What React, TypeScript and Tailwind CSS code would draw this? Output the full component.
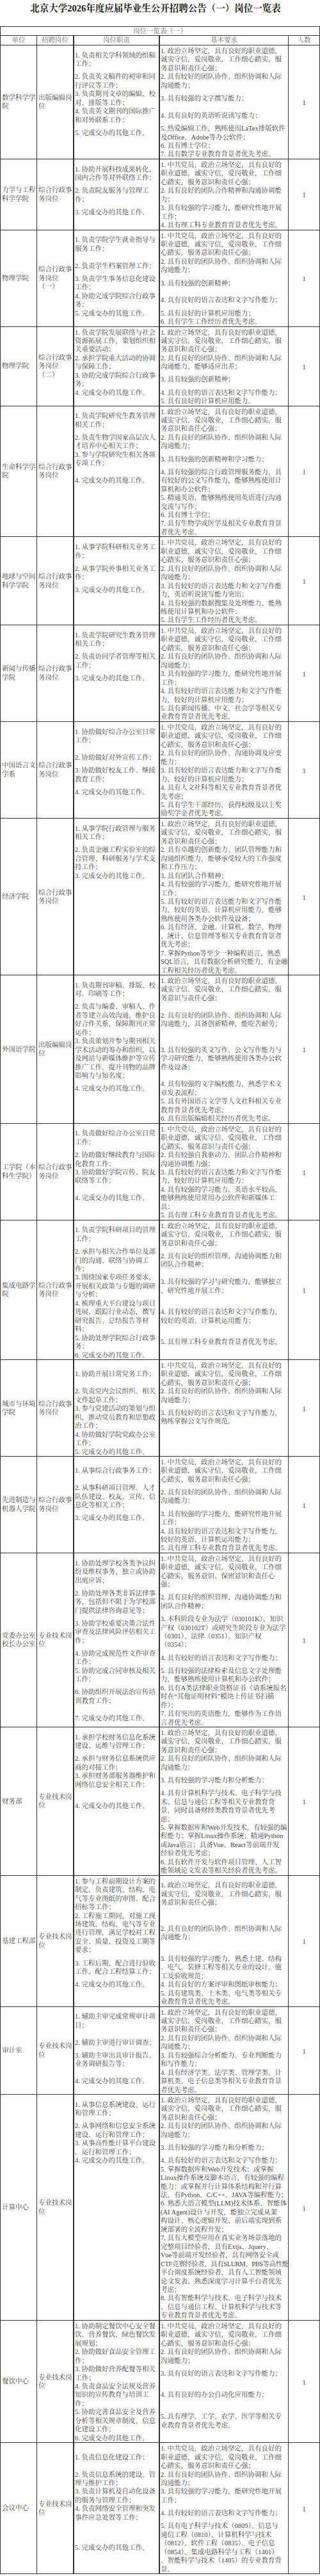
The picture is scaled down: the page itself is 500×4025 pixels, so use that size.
import React, { Fragment } from "react";

const PARTY =
  "1. 中共党员，政治立场坚定，具有良好的|职业道德，诚实守信，爱岗敬业，工作细|心踏实，服务意识和责任心强；";
const STD =
  "1. 政治立场坚定，具有良好的职业道德，|诚实守信，爱岗敬业，工作细心踏实，服|务意识和责任心强；";
const TEAM = "2. 具有良好的团队协作、组织协调和人际|沟通能力；";
const DONE = "完成交办的其他工作。";
const ZH = "综合行政事|务岗位";
const ZY = "专业技术岗|位";

type Row = { u: string; p: string; d: string[]; r: string[] };

const rows: Row[] = [
  {
    u: "数学科学学|院",
    p: "出版编辑岗|位",
    d: [
      "1. 负责相关学科领域的组稿|工作；",
      "2. 负责英文稿件的初审和同|行评议等工作；",
      "3. 负责期刊文章的编辑、校|对、排版等工作；",
      "4. 负责英文期刊的国际推广|和对外联系工作；",
      "5. " + DONE,
    ],
    r: [
      STD,
      "2. 具有较好的团队协作、组织协调和人际|沟通能力；",
      "3. 具有较强的文字撰写能力；",
      "4. 具有良好的英语听说读写能力；",
      "5. 热爱编辑工作，熟练使用LaTex排版软件|及Office、Adobe等办公软件；",
      "6. 具有博士学位；",
      "7. 具有数学专业教育背景者优先考虑。",
    ],
  },
  {
    u: "力学与工程|科学学院",
    p: ZH,
    d: [
      "1. 协助开展科技成果转化、|国内合作等对外联络工作；",
      "2. 负责院友服务与管理工|作；",
      "3. " + DONE,
    ],
    r: [
      PARTY,
      "2. 具有良好的团队合作精神和沟通协调能|力；",
      "3. 具有较强的学习能力，能研究性地开展|工作；",
      "4. 具有理工科专业教育背景者优先考虑。",
    ],
  },
  {
    u: "物理学院",
    p: "综合行政事|务岗位|（一）",
    d: [
      "1. 负责学院学生就业指导与|服务工作；",
      "2. 负责学生档案管理工作；",
      "3. 负责学生事务信息化建设|工作；",
      "4. 协助完成学院综合行政事|务；",
      "5. " + DONE,
    ],
    r: [
      PARTY,
      TEAM,
      "3. 具有较强的创新精神；",
      "4. 具有良好的语言表达和文字写作能力；",
      "5. 具有良好的计算机应用能力；",
      "6. 具有学生工作经历者优先考虑。",
    ],
  },
  {
    u: "物理学院",
    p: "综合行政事|务岗位|（二）",
    d: [
      "1. 负责学院发展联络与社会|资源拓展工作，策划组织相|关重要活动；",
      "2. 承担学院重大活动的协调|与保障工作；",
      "3. 协助完成学院综合行政事|务；",
      "4. " + DONE,
    ],
    r: [
      STD,
      "2. 具有良好的团队协作、组织协调和人际|沟通能力，能够适应出差；",
      "3. 具有较强的创新精神；",
      "4. 具有良好的语言表达和文字写作能力；",
      "5. 具有良好的计算机应用能力。",
    ],
  },
  {
    u: "生命科学学|院",
    p: ZH,
    d: [
      "1. 负责学院研究生教务管理|相关工作；",
      "2. 负责生物学国家高层次人|才培养中心相关工作；",
      "3. 参与学院研究生相关各项|专项工作；",
      "4. " + DONE,
    ],
    r: [
      STD,
      TEAM,
      "3. 具有较强的创新精神和学习能力；",
      "4. 具有较强的综合行政管理服务能力，具|有较好的公文写作能力，能够熟练使用计|算机和办公软件；",
      "5. 精通英语，能够熟练使用英语进行沟通|交流与写作；",
      "6. 具有博士学位；",
      "7. 具有生物学或医学及相关专业教育背景|者优先考虑。",
    ],
  },
  {
    u: "地球与空间|科学学院",
    p: ZH,
    d: ["1. 从事学院科研相关业务工|作；", "2. 从事学院外事相关业务工|作；", "3. " + DONE],
    r: [
      PARTY,
      TEAM,
      "3. 具有较好的语言表达能力和文字写作能|力，英语听说读写能力突出；",
      "4. 具有较强的数据搜集及处理能力，能熟|练使用计算机和办公软件；",
      "5. 具有学生工作经历者优先考虑。",
    ],
  },
  {
    u: "新闻与传播|学院",
    p: ZH,
    d: ["1. 负责学院研究生教务管理|相关工作；", "2. 负责访问学者管理等相关|工作；", "3. " + DONE],
    r: [
      PARTY,
      TEAM,
      "3. 具有较强的学习能力，能研究性地开展|工作；",
      "4. 具有较好的语言表达能力和文字写作能|力，较好的计算机应用能力；",
      "5. 具有新闻传播、中文、社会学等相关专|业教育背景者优先考虑。",
    ],
  },
  {
    u: "中国语言文|学系",
    p: ZH,
    d: [
      "1. 协助做好综合办公室日常|工作；",
      "2. 协助做好对外宣传工作；",
      "3. 协助做好校友工作、继续|教育工作；",
      "4. " + DONE,
    ],
    r: [
      PARTY,
      "2. 具有良好的团队协作、沟通协调及应变|能力；",
      "3. 具有较好的语言表达能力和文字写作能|力，较好的计算机应用能力；",
      "4. 具有人文社科等相关专业教育背景者优|先考虑；",
      "5. 具有学生干部经历，获得校级及以上奖|励奖学金者优先考虑。",
    ],
  },
  {
    u: "经济学院",
    p: ZH,
    d: [
      "1. 从事学院行政管理与服务|相关工作；",
      "2. 负责金融工程实验室的综|合管理、科研服务与学术支|持工作；",
      "3. " + DONE,
    ],
    r: [
      STD,
      "2. 具有卓越的创新能力、团队管理能力和|沟通组织能力，能够承受较大的工作强度|和工作压力；",
      "3. 具有团队合作精神；",
      "4. 具有较强的学习能力，能研究性地开展|工作；",
      "5. 具有较好的语言表达能力和文字写作能|力，较好的英语、计算机应用能力，能够|熟练使用各类办公软件及设备；",
      "6. 具有经济、金融、计算机、数学、物理|、统计、信息管理等相关专业教育背景者|优先考虑；",
      "7. 掌握Python等至少一种编程语言，熟悉|SQL语言，具有数据分析研究能力，有金融|工程相关经历者优先考虑。",
    ],
  },
  {
    u: "外国语学院",
    p: "出版编辑岗|位",
    d: [
      "1. 负责期刊审稿、排版、校|对、印刷等工作；",
      "2. 负责与编委、审稿人、作|者等建立高效沟通，维护良|好合作关系，保障期刊正常|运作；",
      "3. 负责策划并参与期刊相关|学术活动的筹办和组织，以|及网站与新媒体维护等宣传|推广工作，提升刊物的品牌|影响力与知名度；",
      "4. " + DONE,
    ],
    r: [
      "1. 政治立场坚定，具有良好的职业道德，|诚实守信、爱岗敬业，工作细心踏实，服|务意识与责任心强；",
      "2. 具有良好的团队协作、组织协调和人际|沟通能力，具备创新精神，能吃苦耐劳；",
      "3. 具有较强的英文写作、公文写作能力与|学习研究能力，能够熟练使用各类办公软|件及设备；",
      "4. 具有较强的文字编校能力，熟悉学术文|章发表流程；",
      "5. 具有外国语言文学等人文社科相关专业|教育背景者优先考虑；",
      "6. 具有出版编辑相关经历者优先考虑。",
    ],
  },
  {
    u: "工学院（本|科生学院）",
    p: ZH,
    d: [
      "1. 负责做好综合办公室日常|工作；",
      "2. 协助做好继续教育与国际|化教育工作；",
      "3. 协助做好学院宣传、院友|联络等工作；",
      "4. " + DONE,
    ],
    r: [
      "1. 中共党员，政治立场坚定，具有良好的|职业道德，诚实守信、爱岗敬业，工作细|心踏实，服务意识与责任心强；",
      "2. 具有较强自我驱动力，团队合作精神和|沟通协调能力强；",
      "3. 具有较好的语言表达能力和文字写作能|力，较好的计算机应用能力；",
      "4. 具有较强的学习能力，英语水平较高，|能够熟练使用常用办公软件和新媒体工|具；",
      "5. 具有理工科专业教育背景者优先考虑。",
    ],
  },
  {
    u: "集成电路学|院",
    p: ZH,
    d: [
      "1. 负责学院科研项目的管理|工作；",
      "2. 承担与相关合作单位及部|门的沟通、联络与协调工|作；",
      "3. 围绕国家专项任务要求，|开展相关政策与专题的调研|与分析；",
      "4. 梳理重大平台建设与项目|进展，跟踪行业动态，撰写|研究报告、总结报告等材|料；",
      "5. 协助处理学院综合行政事|务；",
      "6. " + DONE,
    ],
    r: [
      STD,
      "2. 具有良好的组织管理、沟通协调能力和|团队合作精神；",
      "3. 具有较强的学习与研究能力，能够独立|、研究性地开展工作；",
      "4. 具有较好的语言表达和文字写作能力，|较好的英语、计算机运用能力；",
      "5. 具有理工科专业教育背景者优先考虑。",
    ],
  },
  {
    u: "城市与环境|学院",
    p: ZH,
    d: [
      "1. 协助开展日常党务工作；",
      "2. 负责党内会议组织、相关|文件起草工作；",
      "3. 参与党建活动的策划与组|织，推动党员教育和思想政|治工作；",
      "4. 协助做好学院党政办公室|工作；",
      "5. " + DONE,
    ],
    r: [PARTY, TEAM, "3. 具有较好的语言表达和文字写作能力，|熟练掌握公文写作规范。"],
  },
  {
    u: "先进制造与|机器人学院",
    p: ZH,
    d: [
      "1. 从事综合行政事务工作；",
      "2. 从事科研项目管理、人才|队伍建设、校友、宣传、信|息化等相关工作；",
      "3. " + DONE,
    ],
    r: [
      PARTY,
      TEAM,
      "3. 具有较强的学习能力，能研究性地开展|工作；",
      "4. 具有较好的语言表达和文字写作能力，|较好的英语、计算机运用能力；",
      "5. 具有理工科专业教育背景者优先考虑。",
    ],
  },
  {
    u: "党委办公室|校长办公室",
    p: ZY,
    d: [
      "1. 协助处理学校各类争议纠|纷及维权事务，独立或协助|出庭应诉；",
      "2. 协助处理各类非诉法律事|务，包括但不限于为学校部|门提供法律咨询意见等；",
      "3. 协助学校重要决策合法性|审查及法律风险评估相关工|作；",
      "4. 协助完成规范性文件审查|工作；",
      "5. 协助完成合同审核及相关|工作；",
      "6. 协助组织开展法治宣传培|训教育工作；",
      "7. " + DONE,
    ],
    r: [
      "1. 中共党员，政治立场坚定，具有良好的|职业道德，诚实守信，爱岗敬业，工作细|心踏实，服务意识、保密意识和责任心|强；",
      "2. 具有良好的组织管理、沟通协调能力和|团队合作精神；",
      "3. 本科阶段专业为法学（030101K）、知识|产权（030102T）或研究生阶段专业为法学|（0301）、法律（0351）、知识产权|（0354）；",
      "4. 具有较好的语言表达和文字写作能力；",
      "5. 具有较强的法律检索及信息文字处理能|力，能够熟练使用计算机和办公软件；",
      "6. 具有A类法律职业资格证书（请系统报名|时在“其他证明材料”模块上传证书扫描|件）；",
      "7. 具有突出的英语能力，能够作为工作语|言者优先考虑。",
    ],
  },
  {
    u: "财务部",
    p: ZY,
    d: [
      "1. 承担学校财务信息化系统|建设、运维与管理工作；",
      "2. 承担与财务信息系统供应|商的对接工作；",
      "3. 承担财务部服务器维护和|网络信息安全相关工作；",
      "4. " + DONE,
    ],
    r: [
      STD,
      TEAM,
      "3. 具有较强的学习能力和分析能力；",
      "4. 具有计算机科学与技术、电子科学与技|术、信息与通信工程等相关专业教育背|景，同时具备财经类教育背景者优先考|虑；",
      "5. 掌握数据库和Web开发技术，有较强的编|程能力；掌握Linux操作系统；精通Python|或Java语言；具备Vue、React等前端开发|经验者优先考虑；",
      "6. 具有软件开发与软件项目管理、人工智|能领域论文发表等相关经验者优先考虑。",
    ],
  },
  {
    u: "基建工程部",
    p: ZY,
    d: [
      "1. 参与工程前期设计方案的|制定，负责建筑、结构、电|气等专业图纸的审图、配合|招标等工作；",
      "2. 工程施工期间，对施工现|场建筑、结构、电气等专业|进行管理，满足学校对工程|安全、质量、投资及工期等|要求；",
      "3. 工程后期，配合进行验收|工作，配合工程结算工作；",
      "4. " + DONE,
    ],
    r: [
      STD,
      TEAM,
      "3. 具有较强的学习能力，熟悉土建、结构|、电气、装修工程等相关专业的设计、施|工及验收规范；",
      "4. 具有良好的方案评审和图纸审核能力；",
      "5. 具有建筑类、土木类、电气类等相关专|业教育背景者优先考虑。",
    ],
  },
  {
    u: "审计室",
    p: ZY,
    d: [
      "1. 辅助主审完成常规审计项|目；",
      "2. 辅助主审进行审计调查；",
      "3. 辅助主审出具审计报告、|业务调研报告等；",
      "4. " + DONE,
    ],
    r: [
      STD,
      TEAM,
      "3. 具有较强综合分析能力、专业判断能力|和写作能力；",
      "4. 具有经济学类、法学类、管理学类、计|算机类、电子信息类等相关专业教育背景|者优先考虑。",
    ],
  },
  {
    u: "计算中心",
    p: ZY,
    d: [
      "1. 从事信息系统建设、运行|和管理工作；",
      "2. 从事网络和信息安全系统|建设、运行和管理工作；",
      "3. 从事高性能计算平台建设|、运行和管理工作；",
      "4. " + DONE,
    ],
    r: [
      STD,
      TEAM,
      "3. 具有较强的学习能力和分析能力；",
      "4. 具有较好的语言表达和文字写作能力；",
      "5. 掌握数据库和Web开发技术；或掌握|Linux操作系统及脚本语言，有较强的编程|能力；或掌握并行计算体系结构和并行算|法，有Python、C/C++、JAVA等编程能力；",
      "6. 熟悉大语言模型(LLM)技术体系、智能体|(AI Agent)设计与开发，能独立完成从架|构设计、核心逻辑开发、前后端实现到系|统部署的全流程开发；",
      "7. 具有大模型应用在真实业务场景落地的|完整项目经验者，具有Extjs、Jquery、|Vue等前端开发经验者，具有网络安全或|~CTF竞赛经验者，具有SLURM、PBS等高性能|平台调度系统经验者，具有人工智能领域|论文发表、熟悉深度学习计算平台者优先|考虑；",
      "8. 具有智能科学与技术、电子科学与技术|、信息与通信工程、计算机科学与技术等|专业教育背景者优先考虑。",
    ],
  },
  {
    u: "餐饮中心",
    p: ZY,
    d: [
      "1. 协助制定餐饮中心安全餐|饮、营养餐饮、绿色餐饮发|展规划；",
      "2. 协助做好食品安全管理工|作；",
      "3. 协助做好营养配餐等相关|工作；",
      "4. 负责食品安全法规及营养|知识的宣传教育与培训工|作；",
      "5. 协助完善食品安全及营养|分析等相关规章制度、信息|化建设工作；",
      "6. " + DONE,
    ],
    r: [
      PARTY,
      TEAM,
      "3. 具有良好的语言表达和文字写作能力；",
      "4. 具有良好的办公自动化应用能力；",
      "5. 具有理学、工学、农学、医学等相关专|业教育背景者优先考虑。",
    ],
  },
  {
    u: "会议中心",
    p: ZY,
    d: [
      "1. 负责信息化建设工作；",
      "2. 负责信息系统的建设、管|理与维护工作；",
      "3. 负责计算机及自动化设备|的服务与管理工作；",
      "4. 负责网络安全管理和突发|事件应急处置等工作；",
      "5. " + DONE,
    ],
    r: [
      PARTY,
      TEAM,
      "3. 具有较强的学习能力，能研究性地开展|工作；",
      "4. 具有较好的语言表达和文字写作能力；",
      "5. 具有电子科学与技术（0809）、信息与|通信工程（0810）、计算机科学与技术|（0812）、软件工程（0835）、电子信息|（0854）、集成电路科学与工程（1401）|、智能科学与技术（1405）的专业教育背|景。",
    ],
  },
];

function Lines({ text }: { text: string }) {
  return (
    <div>
      {text.split("|").map((l, i) => {
        const tight = l.startsWith("~");
        return (
          <div
            key={i}
            className={tight ? "whitespace-nowrap tracking-[-0.45px]" : "whitespace-nowrap"}
          >
            {tight ? l.slice(1) : l}
          </div>
        );
      })}
    </div>
  );
}

function TableRow({ row }: { row: Row }) {
  const n = Math.max(row.d.length, row.r.length);
  const idx = Array.from({ length: n }, (_, i) => i);
  return (
    <div className="flex border-b border-[#333]">
      <div className="w-[57px] shrink-0 border-r border-[#333] flex items-center pl-[2px]">
        <Lines text={row.u} />
      </div>
      <div className="w-[58px] shrink-0 border-r-2 border-[#333] flex items-center pl-[2px]">
        <Lines text={row.p} />
      </div>
      <div className="grid grid-cols-[134px_201px] shrink-0">
        {idx.map((i) => (
          <Fragment key={i}>
            <div
              className={
                i === 0
                  ? "flex items-center border-r-2 border-[#333] pl-[1px] pt-[2px]"
                  : "flex items-center border-r-2 border-[#333] pl-[1px]"
              }
            >
              {row.d[i] ? <Lines text={row.d[i]} /> : null}
            </div>
            <div
              className={
                i === 0
                  ? "flex items-center border-r border-[#333] pl-[1px] pt-[2px]"
                  : "flex items-center border-r border-[#333] pl-[1px]"
              }
            >
              {row.r[i] ? <Lines text={row.r[i]} /> : null}
            </div>
          </Fragment>
        ))}
      </div>
      <div className="flex-1 flex items-center justify-center pt-[3px]">1</div>
    </div>
  );
}

export default function App() {
  return (
    <div className="w-[500px] min-h-[4025px] bg-white text-[#444] font-['Liberation_Serif','Noto_Serif_CJK_SC','Noto_Sans_CJK_SC',serif]">
      <div className="h-[41px] pt-[3px] pr-[14px] text-center text-[14.5px] leading-[20px] font-bold text-[#222]">
        北京大学2026年度应届毕业生公开招聘公告（一）岗位一览表
      </div>
      <div className="border-l border-r border-t border-[#333] text-[10.5px] leading-[13.46px]">
        <div className="h-[14px] border-b border-[#333] text-center text-[#666] leading-[13px]">
          岗位一览表（一）
        </div>
        <div className="flex h-[15px] border-b border-[#333] text-[#666] leading-[14px]">
          <div className="w-[57px] shrink-0 border-r border-[#333] text-center">单位</div>
          <div className="w-[58px] shrink-0 border-r-2 border-[#333] text-center">招聘岗位</div>
          <div className="w-[134px] shrink-0 border-r-2 border-[#333] text-center">岗位职责</div>
          <div className="w-[201px] shrink-0 border-r border-[#333] text-center">基本要求</div>
          <div className="flex-1 text-center">人数</div>
        </div>
        {rows.map((row, i) => (
          <TableRow key={i} row={row} />
        ))}
      </div>
    </div>
  );
}
